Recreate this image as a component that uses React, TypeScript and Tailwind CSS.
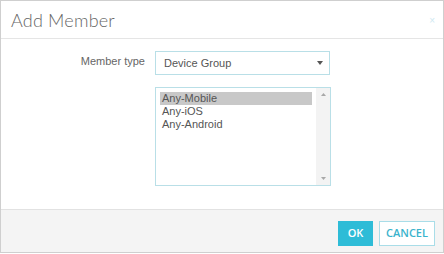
import React from 'react';

const items = ['Any-Mobile', 'Any-iOS', 'Any-Android'];

const App: React.FC = () => {
  return (
    <div className="w-[444px] h-[254px] bg-white">
      <div className="w-[444px] h-[253px] border border-[#cfcfcf] flex flex-col">
        {/* header */}
        <div className="h-[38px] border-b border-[#e5e5e5] flex items-center justify-between pl-[10px] pr-[8px] shrink-0">
          <h2 className="text-[18px] font-light text-[#666] tracking-[0.2px] font-['Lato',sans-serif] leading-none pt-[1px]">
            Add Member
          </h2>
          <span className="text-[10px] text-[#cfe9f2] leading-none mt-[3px] font-['Liberation_Sans',sans-serif]">×</span>
        </div>

        {/* body */}
        <div className="flex-1 pt-[12px] font-['Liberation_Sans',Arial,sans-serif]">
          <div className="flex items-center">
            <label className="w-[145px] text-right pr-[1px] text-[11px] text-[#666] -mt-[4px]">Member type</label>
            <div className="ml-[9px] w-[175px] h-[24px] border border-[#b9dfe7] flex items-center justify-between pl-[8px] pr-[6px]">
              <span className="text-[11px] text-[#555]">Device Group</span>
              <svg width="6" height="4" viewBox="0 0 6 4">
                <path d="M0 0 L6 0 L3 4 Z" fill="#555" />
              </svg>
            </div>
          </div>

          <div className="flex mt-[12px]">
            <div className="ml-[154px] w-[176px] h-[99px] border border-[#b9dfe7] flex">
              <div className="flex-1 pt-[4px] pl-[4px] pr-[4px]">
                {items.map((item, i) => (
                  <div
                    key={item}
                    className={`h-[13px] leading-[13px] pl-[2px] text-[11px] text-[#555] ${i === 0 ? 'bg-[#c8c8c8]' : ''}`}
                  >
                    {item}
                  </div>
                ))}
              </div>
              <div className="w-[14px] bg-[#f3f3f3] flex flex-col items-center justify-between py-[5px]">
                <svg width="5" height="3" viewBox="0 0 5 3">
                  <path d="M0 3 L5 3 L2.5 0 Z" fill="#a8a8a8" />
                </svg>
                <svg width="5" height="3" viewBox="0 0 5 3">
                  <path d="M0 0 L5 0 L2.5 3 Z" fill="#a8a8a8" />
                </svg>
              </div>
            </div>
          </div>
        </div>

        {/* footer */}
        <div className="h-[43px] shrink-0 bg-[#f4f4f4] border-t border-[#e2e2e2] flex items-center justify-end gap-[6px] pr-[8px] pt-[5px] font-['Open_Sans',sans-serif]">
          <button className="w-[35px] h-[25px] bg-[#2ebcd7] text-white text-[11px] font-semibold">OK</button>
          <button className="w-[56px] h-[25px] bg-white border border-[#a9dde8] text-[#3ab3cc] text-[11px] font-semibold">
            CANCEL
          </button>
        </div>
      </div>
    </div>
  );
};

export default App;
